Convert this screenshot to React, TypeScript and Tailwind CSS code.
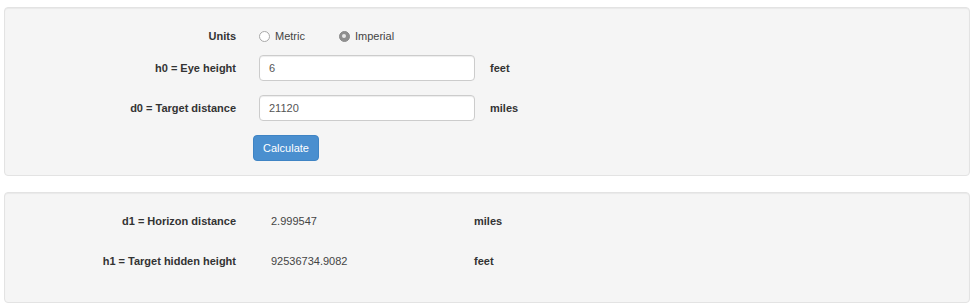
import React from "react";

const font = { fontFamily: '"Liberation Sans", Arial, Helvetica, sans-serif' };

function Label({ children }: { children: React.ReactNode }) {
  return (
    <div className="w-[231px] shrink-0 text-right font-bold text-[11px] text-[#333]">{children}</div>
  );
}

function Radio({ checked, label }: { checked?: boolean; label: string }) {
  return (
    <div className="flex items-center">
      {checked ? (
        <span className="w-[11px] h-[11px] rounded-full bg-[#8f8f8f] border border-[#8a8a8a] flex items-center justify-center">
          <span className="w-[4px] h-[4px] rounded-full bg-[#e8e8e8]" />
        </span>
      ) : (
        <span className="w-[11px] h-[11px] rounded-full bg-white border border-[#a9a9a9]" />
      )}
      <span className="ml-[5px] text-[11px] text-[#444]">{label}</span>
    </div>
  );
}

function InputRow({ label, value, unit }: { label: string; value: string; unit: string }) {
  return (
    <div className="flex items-center h-[26px]">
      <Label>{label}</Label>
      <div className="ml-[23px] w-[216px] h-[26px] bg-white border border-[#ccc] rounded-[4px] shadow-[inset_0_1px_1px_rgba(0,0,0,0.075)] flex items-center px-[9px] text-[11px] text-[#555]">
        {value}
      </div>
      <div className="ml-[15px] font-bold text-[11px] text-[#333]">{unit}</div>
    </div>
  );
}

function ResultRow({ label, value, unit }: { label: string; value: string; unit: string }) {
  return (
    <div className="flex items-center h-[20px]">
      <Label>{label}</Label>
      <div className="ml-[35px] w-[203px] text-[11px] text-[#444]">{value}</div>
      <div className="font-bold text-[11px] text-[#333]">{unit}</div>
    </div>
  );
}

export default function App() {
  return (
    <div className="w-[975px] h-[306px] bg-white pt-[7px] pl-[4px]" style={font}>
      <div className="w-[966px] bg-[#f5f5f5] border border-[#e3e3e3] rounded-[4px] shadow-[inset_0_1px_1px_rgba(0,0,0,0.05)] pt-[17px] pb-[14px]">
        <div className="flex items-center h-[22px]">
          <Label>Units</Label>
          <div className="ml-[23px] flex items-center">
            <Radio label="Metric" />
            <div className="ml-[34px]">
              <Radio checked label="Imperial" />
            </div>
          </div>
        </div>
        <div className="mt-[8px]">
          <InputRow label="h0 = Eye height" value="6" unit="feet" />
        </div>
        <div className="mt-[14px]">
          <InputRow label="d0 = Target distance" value="21120" unit="miles" />
        </div>
        <div className="mt-[14px] flex">
          <div className="w-[248px] shrink-0" />
          <button className="h-[26px] w-[66px] bg-[#4a8fcf] border border-[#3f84c4] rounded-[4px] text-white text-[11px]">
            Calculate
          </button>
        </div>
      </div>
      <div className="mt-[16px] w-[966px] h-[111px] bg-[#f5f5f5] border border-[#e3e3e3] rounded-[4px] shadow-[inset_0_1px_1px_rgba(0,0,0,0.05)] pt-[18px]">
        <ResultRow label="d1 = Horizon distance" value="2.999547" unit="miles" />
        <div className="mt-[20px]">
          <ResultRow label="h1 = Target hidden height" value="92536734.9082" unit="feet" />
        </div>
      </div>
    </div>
  );
}
